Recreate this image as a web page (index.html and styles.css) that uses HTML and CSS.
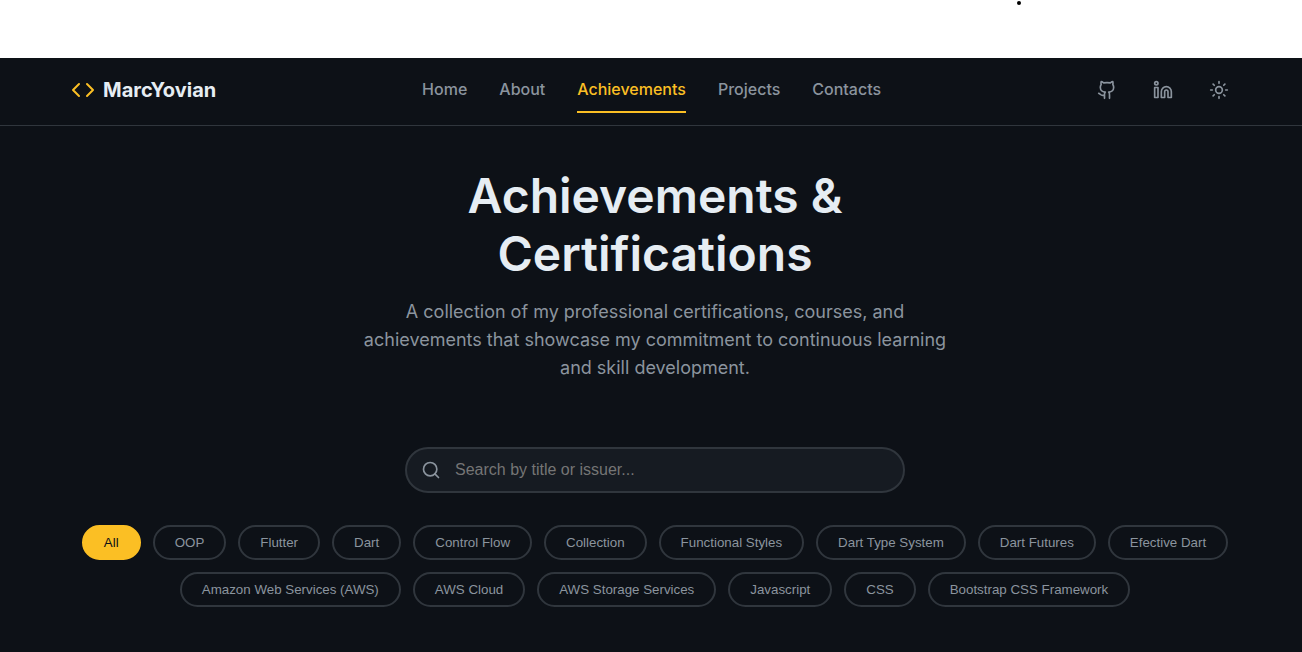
FILE: index.html
```html
<!DOCTYPE html>
<html lang="en">
<head>
<meta charset="utf-8">
<title>MarcYovian - Achievements</title>
<meta name="viewport" content="width=device-width, initial-scale=1">
<link rel="stylesheet" href="styles.css">
</head>
<body>
<div class="top-strip"><span class="dot"></span></div>
<header class="site-header">
  <div class="header-inner">
    <a class="logo" href="#">
      <svg class="icon icon-code" viewBox="0 0 24 24" aria-hidden="true"><path d="m16 18 6-6-6-6M8 6l-6 6 6 6"/></svg>
      <span>MarcYovian</span>
    </a>
    <nav class="menu">
      <a class="menu-link" href="#">Home</a>
      <a class="menu-link" href="#">About</a>
      <a class="menu-link active" href="#">Achievements</a>
      <a class="menu-link" href="#">Projects</a>
      <a class="menu-link" href="#">Contacts</a>
    </nav>
    <div class="actions">
      <a class="action" href="#" aria-label="GitHub"><svg class="icon icon-action" viewBox="0 0 24 24" aria-hidden="true"><path d="M15 22v-4a4.8 4.8 0 0 0-1-3.5c3 0 6-2 6-5.5.08-1.25-.27-2.48-1-3.5.28-1.15.28-2.35 0-3.5 0 0-1 0-3 1.5-2.64-.5-5.36-.5-8 0C6 2 5 2 5 2c-.3 1.15-.3 2.35 0 3.5A5.4 5.4 0 0 0 4 9c0 3.5 3 5.5 6 5.5-.39.49-.68 1.05-.85 1.65S8.93 17.38 9 18v4M9 18c-4.51 2-5-2-7-2"/></svg></a>
      <a class="action" href="#" aria-label="LinkedIn"><svg class="icon icon-action" viewBox="0 0 24 24" aria-hidden="true"><path d="M16 8a6 6 0 0 1 6 6v7h-4v-7a2 2 0 0 0-4 0v7h-4v-7a6 6 0 0 1 6-6z"/><rect x="2" y="9" width="4" height="12"/><circle cx="4" cy="4" r="2"/></svg></a>
      <button class="action" type="button" aria-label="Toggle theme"><svg class="icon icon-action" viewBox="0 0 24 24" aria-hidden="true"><circle cx="12" cy="12" r="4"/><path d="M12 2v2M12 20v2M4.93 4.93l1.41 1.41M17.66 17.66l1.41 1.41M2 12h2M20 12h2M6.34 17.66l-1.41 1.41M19.07 4.93l-1.41 1.41"/></svg></button>
    </div>
  </div>
</header>
<main class="page">
  <section class="hero">
    <h1 class="title">Achievements &amp; Certifications</h1>
    <p class="subtitle">A collection of my professional certifications, courses, and achievements that showcase my commitment to continuous learning and skill development.</p>
  </section>
  <label class="search">
    <svg class="icon icon-search" viewBox="0 0 24 24" aria-hidden="true"><circle cx="11" cy="11" r="8"/><path d="m21 21-4.35-4.35"/></svg>
    <input class="search-input" type="text" placeholder="Search by title or issuer..." aria-label="Search by title or issuer">
  </label>
  <div class="filters">
    <button class="chip selected" type="button">All</button>
    <button class="chip" type="button">OOP</button>
    <button class="chip" type="button">Flutter</button>
    <button class="chip" type="button">Dart</button>
    <button class="chip" type="button">Control Flow</button>
    <button class="chip" type="button">Collection</button>
    <button class="chip" type="button">Functional Styles</button>
    <button class="chip" type="button">Dart Type System</button>
    <button class="chip" type="button">Dart Futures</button>
    <button class="chip" type="button">Efective Dart</button>
    <button class="chip" type="button">Amazon Web Services (AWS)</button>
    <button class="chip" type="button">AWS Cloud</button>
    <button class="chip" type="button">AWS Storage Services</button>
    <button class="chip" type="button">Javascript</button>
    <button class="chip" type="button">CSS</button>
    <button class="chip" type="button">Bootstrap CSS Framework</button>
  </div>
</main>
</body>
</html>
```
FILE: styles.css
```css
* { box-sizing: border-box; }

body {
  margin: 0;
  background: #0d1117;
  color: #e6edf3;
  font-family: Inter, "Liberation Sans", sans-serif;
}

.top-strip {
  position: relative;
  height: 58px;
  background: #ffffff;
}

.dot {
  position: absolute;
  top: 1px;
  left: 1017px;
  width: 4px;
  height: 4px;
  border-radius: 50%;
  background: #000000;
}

.site-header {
  padding-left: 8px;
  border-bottom: 1px solid #30363d;
}

.header-inner {
  display: flex;
  align-items: center;
  justify-content: space-between;
  max-width: 1200px;
  margin: 0 auto;
  padding: 9px 16px 12px;
}

.logo {
  display: flex;
  align-items: center;
  gap: 8px;
  color: #e6edf3;
  font-size: 20px;
  font-weight: 700;
  line-height: 24px;
  text-decoration: none;
}

.icon {
  display: block;
  fill: none;
  stroke: currentColor;
  stroke-width: 2;
  stroke-linecap: round;
  stroke-linejoin: round;
}

.icon-code { width: 24px; height: 24px; color: #fbbf24; }
.icon-action { width: 20px; height: 20px; }
.icon-search { width: 20px; height: 20px; color: #8b949e; }

.menu { display: flex; gap: 32px; }

.menu-link {
  padding: 10px 0;
  border-bottom: 2px solid transparent;
  color: #8b949e;
  font-size: 16px;
  font-weight: 500;
  line-height: 24px;
  text-decoration: none;
}

.menu-link.active { color: #fbbf24; border-color: #fbbf24; }

.actions { display: flex; gap: 16px; }

.action {
  display: grid;
  place-items: center;
  width: 40px;
  height: 40px;
  padding: 0;
  border: 0;
  background: none;
  color: #8b949e;
}

.page {
  display: flex;
  flex-direction: column;
  align-items: center;
  padding: 41px 0 44px 8px;
}

.hero { max-width: 600px; text-align: center; }

.title {
  margin: 0 0 15px;
  font-size: 48px;
  font-weight: 600;
  line-height: 58px;
}

.subtitle {
  margin: 0 0 65px;
  color: #8b949e;
  font-size: 18px;
  line-height: 28px;
}

.search {
  display: flex;
  align-items: center;
  gap: 14px;
  width: 100%;
  max-width: 500px;
  margin-bottom: 32px;
  padding: 0 14px;
  border: 2px solid #30363d;
  border-radius: 24px;
  background: #161b22;
}

.search-input {
  flex: 1;
  min-width: 0;
  height: 42px;
  padding: 0;
  border: 0;
  outline: 0;
  background: none;
  color: #e6edf3;
  font-family: "Liberation Sans", Arial, sans-serif;
  font-size: 16px;
}

.search-input::placeholder { color: #757575; }

.filters {
  display: flex;
  flex-wrap: wrap;
  justify-content: center;
  gap: 12px;
  max-width: 1168px;
}

.chip {
  padding: 8px 20px;
  border: 2px solid #30363d;
  border-radius: 20px;
  background: transparent;
  color: #8b949e;
  font-family: "Liberation Sans", Arial, sans-serif;
  line-height: 15px;
}

.chip.selected {
  border-color: #fbbf24;
  background: #fbbf24;
  color: #0d1117;
}
```
